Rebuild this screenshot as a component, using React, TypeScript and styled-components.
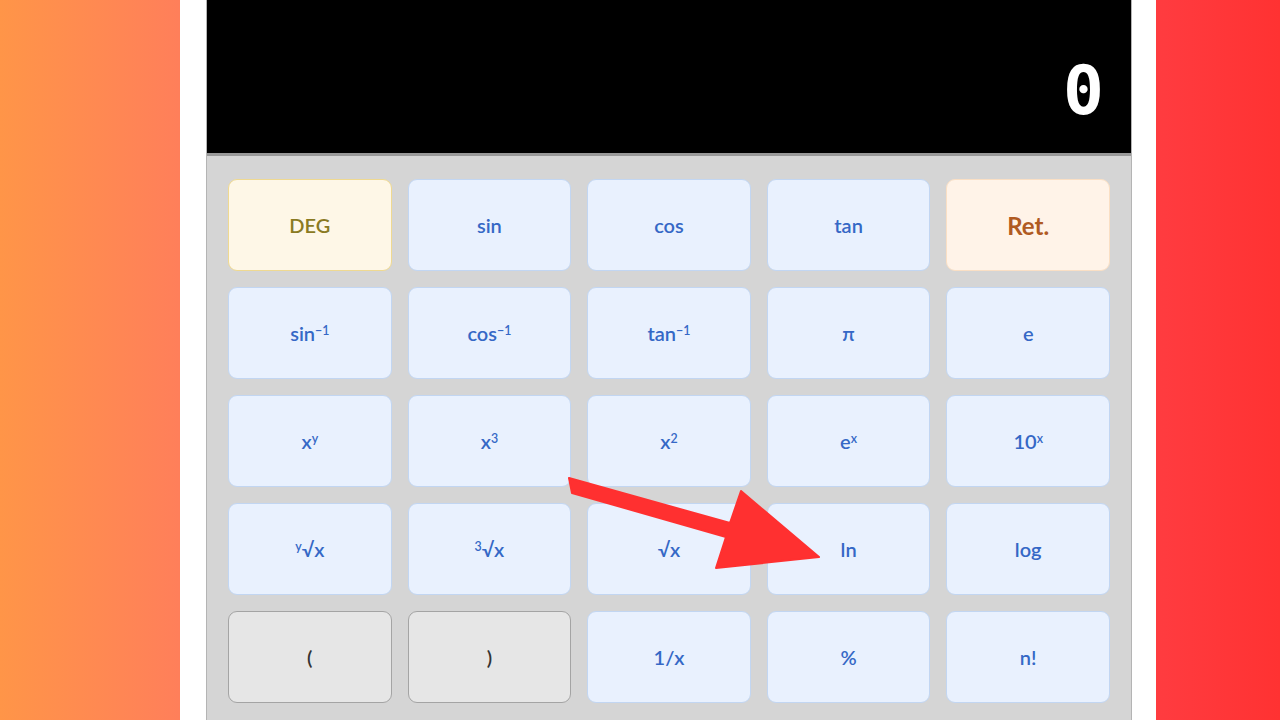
import React from 'react'
import styled, { createGlobalStyle, css } from 'styled-components'

const GlobalStyle = createGlobalStyle`
    html, body {
        margin: 0;
        padding: 0;
    }
    body {
        width: 1280px;
        height: 720px;
        overflow: hidden;
        font-family: Lato, "Noto Sans", sans-serif;
    }
`

type Variant = 'fn' | 'deg' | 'ret' | 'paren'

interface Key {
    label: React.ReactNode
    variant?: Variant
}

const Sup = styled.sup`
    font-size: 0.62em;
    line-height: 0;
    position: relative;
    top: -0.15em;
`

function buildKeys(): Key[] {
    return [
        { label: 'DEG', variant: 'deg' },
        { label: 'sin' },
        { label: 'cos' },
        { label: 'tan' },
        { label: 'Ret.', variant: 'ret' },

        { label: <>sin<Sup>−1</Sup></> },
        { label: <>cos<Sup>−1</Sup></> },
        { label: <>tan<Sup>−1</Sup></> },
        { label: 'π' },
        { label: 'e' },

        { label: <>x<Sup>y</Sup></> },
        { label: <>x<Sup>3</Sup></> },
        { label: <>x<Sup>2</Sup></> },
        { label: <>e<Sup>x</Sup></> },
        { label: <>10<Sup>x</Sup></> },

        { label: <><Sup>y</Sup>√x</> },
        { label: <><Sup>3</Sup>√x</> },
        { label: '√x' },
        { label: 'ln' },
        { label: 'log' },

        { label: '(', variant: 'paren' },
        { label: ')', variant: 'paren' },
        { label: '1/x' },
        { label: '%' },
        { label: 'n!' },
    ]
}

export default function App(): JSX.Element {
    const keys = buildKeys()
    return (
        <Page>
            <GlobalStyle />
            <Sheet>
                <Calculator>
                    <Display>
                        <Readout>0</Readout>
                    </Display>
                    <Keypad>
                        {keys.map((k, i) => (
                            <KeyButton key={i} $variant={k.variant || 'fn'}>
                                {k.label}
                            </KeyButton>
                        ))}
                    </Keypad>
                </Calculator>
            </Sheet>
            <Arrow viewBox="0 0 1280 720" width="1280" height="720">
                <polygon
                    points="569,478 730,523 741,491 819,557 716,568 726,537 572,493"
                    fill="#ff3030"
                    stroke="#ff3030"
                    strokeWidth="2"
                    strokeLinejoin="round"
                />
            </Arrow>
        </Page>
    )
}

const Page = styled.div`
    position: relative;
    width: 1280px;
    height: 720px;
    overflow: hidden;
    display: flex;
    padding-left: 180px;
    box-sizing: border-box;
    background: linear-gradient(90deg, #ff9548 0%, #ff7f5a 14%, #ff3b3f 91%, #ff3232 100%);
`

const Sheet = styled.div`
    width: 976px;
    height: 100%;
    background: #ffffff;
    padding-left: 26px;
    box-sizing: border-box;
`

const Calculator = styled.div`
    width: 926px;
    height: 100%;
    border-left: 1px solid #b4b4b4;
    border-right: 1px solid #b4b4b4;
    box-sizing: border-box;
    display: flex;
    flex-direction: column;
    background: #d5d5d5;
`

const Display = styled.div`
    height: 156px;
    flex-shrink: 0;
    box-sizing: border-box;
    background: #000;
    border-bottom: 3px solid #999;
    display: flex;
    justify-content: flex-end;
    align-items: center;
    padding: 28px 27px 0 0;
`

const Readout = styled.span`
    font-family: "DejaVu Sans Mono", monospace;
    font-weight: bold;
    font-size: 68px;
    line-height: 1;
    color: #fff;
`

const Keypad = styled.div`
    display: grid;
    grid-template-columns: repeat(5, 1fr);
    grid-auto-rows: 92px;
    gap: 16px;
    padding: 23px 21px;
`

const variants = {
    fn: css`
        background: #e9f1fe;
        border-color: #c2d6f2;
        color: #3568c6;
    `,
    deg: css`
        background: #fef7e7;
        border-color: #efd991;
        color: #8a7a22;
    `,
    ret: css`
        background: #fff3e8;
        border-color: #fadfc4;
        color: #b05a22;
        font-size: 24px;
        font-weight: 700;
    `,
    paren: css`
        background: #e6e6e6;
        border-color: #a4a4a4;
        color: #333;
    `,
}

const KeyButton = styled.button<{ $variant: Variant }>`
    box-sizing: border-box;
    border: 1px solid;
    border-radius: 9px;
    font-family: Lato, "Noto Sans", sans-serif;
    font-size: 20px;
    font-weight: 600;
    display: flex;
    align-items: center;
    justify-content: center;
    padding: 0;
    ${p => variants[p.$variant]}
`

const Arrow = styled.svg`
    position: absolute;
    left: 0;
    top: 0;
    pointer-events: none;
`
